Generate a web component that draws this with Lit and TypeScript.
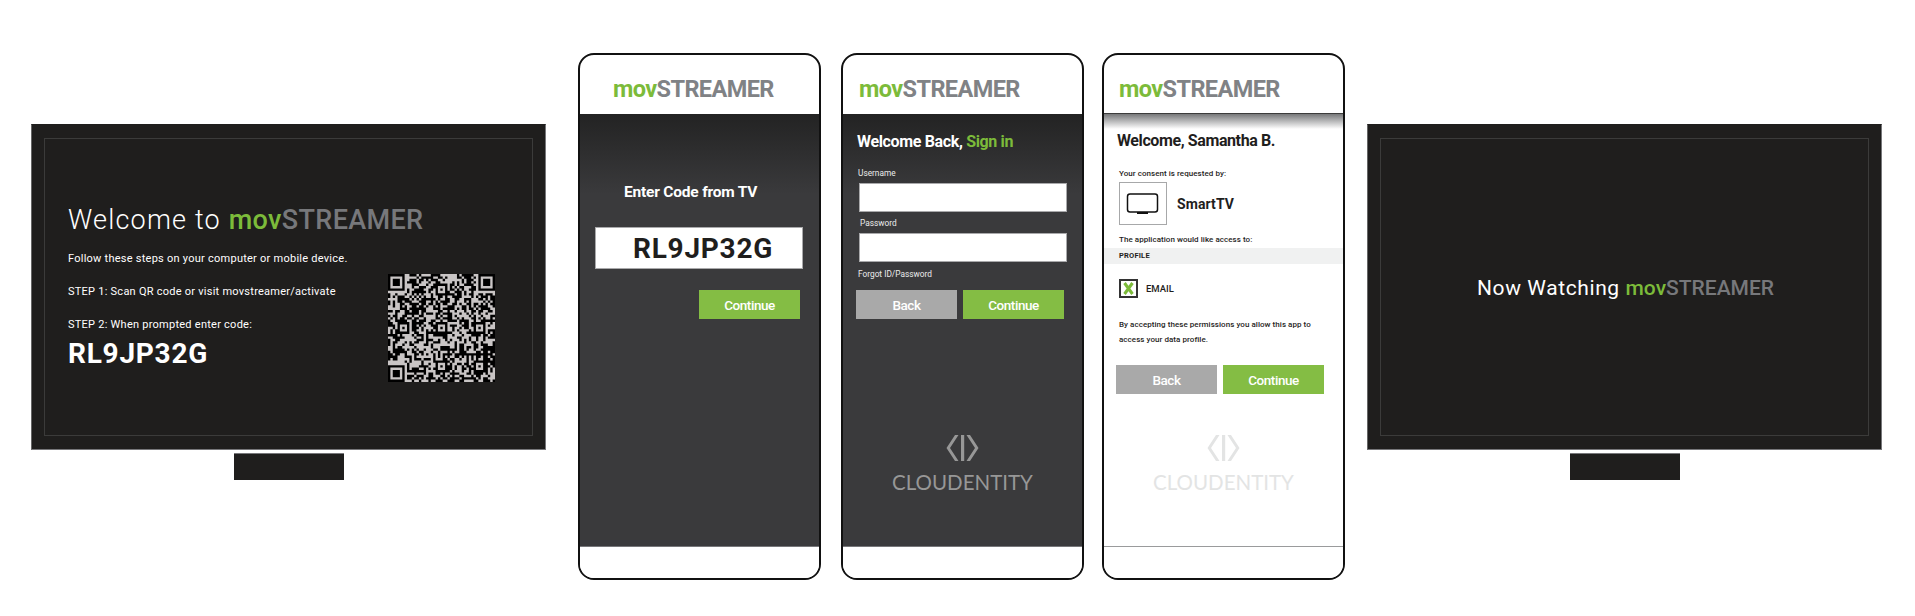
import { LitElement, html, css, svg } from "lit";
import { customElement } from "lit/decorators.js";

const QR_SIZE = 45;

function qrPath(): { light: string } {
  let seed = 20240611;
  const rnd = () => {
    seed = (seed * 1664525 + 1013904223) >>> 0;
    return (seed >>> 16) / 65536;
  };
  const grid: boolean[][] = [];
  for (let y = 0; y < QR_SIZE; y++) {
    grid.push([]);
    for (let x = 0; x < QR_SIZE; x++) grid[y].push(rnd() > 0.5);
  }
  const stamp = (cx: number, cy: number, r: number) => {
    for (let y = cy - r - 1; y <= cy + r + 1; y++)
      for (let x = cx - r - 1; x <= cx + r + 1; x++) {
        if (y < 0 || x < 0 || y >= QR_SIZE || x >= QR_SIZE) continue;
        const d = Math.max(Math.abs(x - cx), Math.abs(y - cy));
        if (r === 3) grid[y][x] = d === 4 || d === 2;
        else if (d <= 2) grid[y][x] = d === 1;
      }
  };
  for (const [x, y] of [[22, 6], [6, 22], [22, 22], [38, 22], [22, 38], [38, 38]]) stamp(x, y, 2);
  for (const [x, y] of [[3, 3], [41, 3], [3, 41]]) stamp(x, y, 3);
  let light = "";
  grid.forEach((row, y) =>
    row.forEach((on, x) => {
      if (on) light += `M${x} ${y}h1v1h-1z`;
    })
  );
  return { light };
}

const QR = qrPath();

const brand = () => html`<span class="brand"><span class="mov">mov</span><span class="streamer">STREAMER</span></span>`;

@customElement("app-root")
export class AppRoot extends LitElement {
  static styles = css`
    :host { display: block; height: 616px; background: #fff; font-family: Roboto, "Liberation Sans", sans-serif; overflow: hidden; }
    * { box-sizing: border-box; }
    .row { display: flex; align-items: flex-start; padding: 53px 0 0 31px; }

    .tv-wrap { display: flex; flex-direction: column; align-items: center; width: 515px; margin-top: 71px; flex: none; }
    .tv { width: 515px; height: 326px; background: #1f1e1d; border: 1px solid #77777a; border-top-color: #1f1e1d; border-left-color: #666; padding: 13px 12px; }
    .frame { width: 100%; height: 100%; border: 1px solid #3b3b3a; }
    .stand { width: 110px; height: 27px; margin-top: 3px; background: #1f1e1d; border-top: 1px solid #77777a; }

    .frame.welcome { display: flex; flex-direction: column; padding: 64px 37px 0 23px; }
    .tv-title { font-size: 27px; line-height: 34px; font-weight: 300; color: #fff; letter-spacing: 1.2px; white-space: nowrap; }
    .tv-title .brand { font-weight: 500; letter-spacing: 0.35px; }
    .tv-title .streamer { color: #77787b; }
    .steps { display: flex; justify-content: space-between; align-items: flex-start; margin-top: 14px; }
    .tv-line { font-size: 11px; line-height: 16px; color: #fff; letter-spacing: 0.25px; white-space: nowrap; }
    .l2, .l3 { margin-top: 17px; }
    .tv-code { font-size: 28px; line-height: 32px; margin-top: 5px; font-weight: 700; color: #fff; letter-spacing: 0.75px; }
    .qr { width: 107px; height: 108px; margin-top: 23px; background: #000; display: block; flex: none; }
    .qr path { fill: #c9c5c5; }

    .frame.watching { display: flex; align-items: center; justify-content: center; padding: 2px 0 0 2px; }
    .now { font-size: 21px; line-height: 28px; color: #fff; letter-spacing: 0.6px; white-space: nowrap; font-weight: 400; }
    .now .brand { font-weight: 500; letter-spacing: 0; }
    .now .streamer { color: #77787b; }

    .mov { color: #7cbb3a; }
    .streamer { color: #808285; }

    .phone { width: 243px; height: 527px; border: 2px solid #111; border-radius: 16px; background: #fff; overflow: hidden; display: flex; flex-direction: column; flex: none; }
    .head { height: 59px; display: flex; align-items: center; padding-top: 9px; font-size: 23.5px; font-weight: 700; letter-spacing: -0.6px; flex: none; }
    .body { flex: 1; display: flex; flex-direction: column; background: linear-gradient(#232323 0, #3a3a3c 80px); color: #fff; min-height: 0; }
    .foot { height: 32px; border-top: 1px solid #77777a; background: #fff; flex: none; }

    .p1 { margin-left: 32px; }
    .p1 .head { padding-left: 33px; }
    .p2 { margin-left: 20px; }
    .p2 .head { padding-left: 16px; }
    .p3 { margin-left: 18px; }
    .p3 .head { padding-left: 15px; }
    .tv2 { margin-left: 22px; }

    .btn { width: 101px; height: 29px; display: flex; align-items: center; justify-content: center; color: #fff; font-size: 13.5px; font-weight: 500; letter-spacing: -0.45px; background: #84bd44; flex: none; }
    .btn.back { background: #a9a9a9; }
    .btns { display: flex; gap: 6px; }

    .enter { font-size: 15.5px; line-height: 20px; font-weight: 700; letter-spacing: -0.2px; margin: 68px 0 0 44px; }
    .codebox { width: 208px; height: 42px; margin: 25px 0 0 15px; background: #fff; border: 1px solid #a9a9ab; display: flex; align-items: center; padding-left: 37px; color: #1f1e1d; font-size: 28px; font-weight: 700; letter-spacing: 0.75px; }
    .p1 .btn { margin: 21px 0 0 119px; }

    .hello { font-size: 16px; line-height: 20px; font-weight: 700; margin: 18px 0 0 14px; letter-spacing: -0.35px; }
    .hello em { font-style: normal; color: #7cbb3a; }
    .label { font-size: 8.3px; line-height: 12px; font-weight: 400; color: #ececec; }
    .label.a { margin: 15px 0 0 15px; }
    .label.b { margin: 5px 0 0 17px; }
    .label.c { margin: 6px 0 0 15px; }
    .input { width: 208px; height: 29px; margin: 4px 0 0 16px; background: #fff; border: 1px solid #a9a9ab; }
    .p2 .btns { margin: 10px 0 0 13px; }

    .cloud { display: flex; flex-direction: column; align-items: center; margin-top: 116px; color: #979797; }
    .cloud svg { width: 33px; height: 26px; display: block; fill: currentColor; }
    .cloud span { font-family: Lato, "Open Sans", sans-serif; font-size: 20.5px; line-height: 24px; font-weight: 400; margin-top: 9px; }
    .p3 .cloud { color: #e3e4e4; margin-top: 41px; }

    .p3 .head { border-bottom: 1px solid #3c3c3c; }
    .p3 .body { background: linear-gradient(#77787a 0, #fff 15px); color: #1f1e1d; }
    .p3 .foot { border-top: 1px solid #9a9b9c; }
    .p3 .hello { margin: 17px 0 0 13px; color: #1f1e1d; letter-spacing: -0.4px; }
    .small { font-size: 8px; line-height: 12px; font-weight: 500; letter-spacing: 0.05px; margin-left: 15px; color: #1f1e1d; }
    .small.cons { margin-top: 17px; }
    .app { display: flex; align-items: center; margin: 2px 0 0 15px; gap: 10px; }
    .appbox { width: 48px; height: 43px; border: 1px solid #a7a8a9; display: flex; align-items: center; justify-content: center; flex: none; }
    .appbox svg { width: 34px; height: 24px; display: block; }
    .appname { font-size: 14px; font-weight: 700; letter-spacing: 0.1px; }
    .small.req { margin-top: 9px; }
    .band { height: 16px; margin-top: 2px; background: #f0f1f1; padding-left: 15px; font-size: 7.5px; font-weight: 700; line-height: 16px; letter-spacing: 0.2px; }
    .perm { display: flex; align-items: center; margin: 15px 0 0 15px; gap: 8px; font-size: 9.5px; font-weight: 500; }
    .check { width: 19px; height: 19px; border: 2px solid #333; display: flex; align-items: center; justify-content: center; flex: none; }
    .check svg { width: 11px; height: 13px; display: block; }
    .small.by { margin-top: 19px; line-height: 15px; font-size: 8px; }
    .p3 .btns { margin: 18px 0 0 12px; }
  `;

  private logoMark() {
    return svg`<path d="M9 0h3.5L4 13l8.5 13H9L.5 13z" /><path d="M15 0h3.2v26H15z" /><path d="M24 0h-3.5L29 13l-8.5 13H24l8.5-13z" />`;
  }

  render() {
    return html`
      <div class="row">
        <div class="tv-wrap">
          <div class="tv">
            <div class="frame welcome">
              <div class="tv-title">Welcome to ${brand()}</div>
              <div class="steps">
                <div>
                  <div class="tv-line">Follow these steps on your computer or mobile device.</div>
                  <div class="tv-line l2">STEP 1: Scan QR code or visit movstreamer/activate</div>
                  <div class="tv-line l3">STEP 2: When prompted enter code:</div>
                  <div class="tv-code">RL9JP32G</div>
                </div>
                <svg class="qr" viewBox="0 0 ${QR_SIZE} ${QR_SIZE}" preserveAspectRatio="none">${svg`<path d=${QR.light} />`}</svg>
              </div>
            </div>
          </div>
          <div class="stand"></div>
        </div>

        <div class="phone p1">
          <div class="head">${brand()}</div>
          <div class="body">
            <div class="enter">Enter Code from TV</div>
            <div class="codebox">RL9JP32G</div>
            <div class="btn">Continue</div>
          </div>
          <div class="foot"></div>
        </div>

        <div class="phone p2">
          <div class="head">${brand()}</div>
          <div class="body">
            <div class="hello">Welcome Back, <em>Sign in</em></div>
            <div class="label a">Username</div>
            <div class="input"></div>
            <div class="label b">Password</div>
            <div class="input"></div>
            <div class="label c">Forgot ID/Password</div>
            <div class="btns"><div class="btn back">Back</div><div class="btn">Continue</div></div>
            <div class="cloud"><svg viewBox="0 0 33 26">${this.logoMark()}</svg><span>CLOUDENTITY</span></div>
          </div>
          <div class="foot"></div>
        </div>

        <div class="phone p3">
          <div class="head">${brand()}</div>
          <div class="body">
            <div class="hello">Welcome, Samantha B.</div>
            <div class="small cons">Your consent is requested by:</div>
            <div class="app">
              <div class="appbox">
                <svg viewBox="0 0 34 24"><rect x="1.5" y="2" width="30" height="18" rx="2.5" fill="none" stroke="#111" stroke-width="1.5" /><rect x="11" y="20" width="11" height="2" fill="#111" /></svg>
              </div>
              <div class="appname">SmartTV</div>
            </div>
            <div class="small req">The application would like access to:</div>
            <div class="band">PROFILE</div>
            <div class="perm">
              <div class="check"><svg viewBox="0 0 11 13"><path d="M1.5 1 9.5 12M9.5 1 1.5 12" stroke="#7cbb3a" stroke-width="3" fill="none" /></svg></div>
              <div>EMAIL</div>
            </div>
            <div class="small by">By accepting these permissions you allow this app to<br />access your data profile.</div>
            <div class="btns"><div class="btn back">Back</div><div class="btn">Continue</div></div>
            <div class="cloud"><svg viewBox="0 0 33 26">${this.logoMark()}</svg><span>CLOUDENTITY</span></div>
          </div>
          <div class="foot"></div>
        </div>

        <div class="tv-wrap tv2">
          <div class="tv">
            <div class="frame watching"><div class="now">Now Watching ${brand()}</div></div>
          </div>
          <div class="stand"></div>
        </div>
      </div>
    `;
  }
}
